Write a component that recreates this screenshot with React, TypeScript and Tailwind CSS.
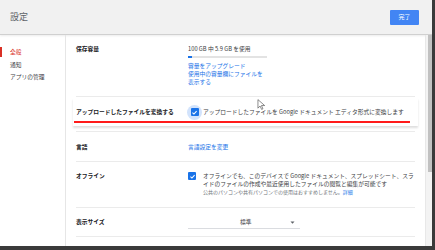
import { useState } from "react";

const sideItems = ["全般", "通知", "アプリの管理"];

function Check() {
  return (
    <span className="flex h-[8px] w-[8px] items-center justify-center rounded-[1px] bg-[#1a73e8]">
      <svg viewBox="0 0 12 12" className="h-[7px] w-[7px]">
        <path d="M2.5 6.2 5 8.6 9.6 3.6" fill="none" stroke="#fff" strokeWidth="1.8" />
      </svg>
    </span>
  );
}

function Row({ label, className, children }: { label: string; className: string; children?: React.ReactNode }) {
  return (
    <div className={"flex border-b border-[#ebebeb] " + className}>
      <div className="w-[112px] shrink-0 font-bold text-[#202124]">{label}</div>
      <div className="flex-1">{children}</div>
    </div>
  );
}

export default function App() {
  const [active] = useState(0);
  return (
    <div className="flex h-[250px] w-[435px] flex-col bg-[#3a3a3a] pb-[4px] pr-[3px] font-['Noto_Sans_CJK_JP','Noto_Sans',sans-serif] text-[5.75px] leading-[8px] text-[#3c4043]">
      <div className="flex flex-1 flex-col overflow-hidden bg-white">
        <div className="flex h-[35px] shrink-0 items-center justify-between border-b border-[#d0d0d0] bg-[#f1f1f1] pl-[10px] pr-[13px] shadow-[0_1px_2px_rgba(0,0,0,0.08)]">
          <span className="text-[9px] leading-[12px] text-[#5f6368]">設定</span>
          <button className="h-[15px] w-[29px] rounded-[1px] bg-[#4285f4] text-[6px] text-white">完了</button>
        </div>
        <div className="flex flex-1">
          <div className="w-[66px] shrink-0 border-r border-[#e6e6e6] pt-[11px]">
            {sideItems.map((item, i) => (
              <div key={item} className="flex h-[12.5px] items-center">
                <span className={"h-[10px] w-[2px] " + (i === active ? "bg-[#d93025]" : "")} />
                <span className={"pl-[8px] " + (i === active ? "text-[#d93025]" : "text-[#3c4043]")}>{item}</span>
              </div>
            ))}
          </div>
          <div className="relative flex-1 pl-[10px] pr-[10px]">
            <Row label="保存容量" className="h-[62px] pt-[10px]">
              <div>100 GB 中 5.9 GB を使用</div>
              <div className="mt-[3px] flex h-[2px] w-[79px] items-center bg-[#e3e3e3]">
                <div className="h-[2px] w-[4px] bg-[#1a73e8]" />
              </div>
              <div className="mt-[4px] leading-[7.8px] text-[#1a73e8]">
                <div>容量をアップグレード</div>
                <div>使用中の容量欄にファイルを</div>
                <div>表示する</div>
              </div>
            </Row>
            <div className="h-[35px] border-b border-[#ebebeb] pt-[1px]">
              <div className="-mx-[3px] flex h-[28px] items-center px-[3px] shadow-[0_2px_2px_rgba(0,0,0,0.13)]">
                <div className="w-[112px] shrink-0 font-bold text-[#202124]">アップロードしたファイルを変換する</div>
                <div className="flex items-center">
                  <span className="-ml-[1px] flex h-[15px] w-[15px] items-center justify-center rounded-full bg-[#d2e3fc]">
                    <Check />
                  </span>
                  <span className="ml-[1px] whitespace-nowrap">アップロードしたファイルを Google ドキュメント エディタ形式に変換します</span>
                </div>
              </div>
              <div className="-mt-[5px] ml-[-2px] h-[2px] w-[336px] bg-[#ff1a1a]" />
            </div>
            <Row label="言語" className="h-[30px] items-center">
              <span className="text-[#1a73e8]">言語設定を変更</span>
            </Row>
            <Row label="オフライン" className="h-[46px] pt-[10px]">
              <div className="flex">
                <span className="shrink-0">
                  <Check />
                </span>
                <div className="ml-[7px] whitespace-nowrap">
                  <div>オフラインでも、このデバイスで Google ドキュメント、スプレッドシート、スラ</div>
                  <div>イドのファイルの作成や最近使用したファイルの閲覧と編集が可能です</div>
                  <div className="text-[5px] text-[#70757a]">
                    公共のパソコンや共有パソコンでの使用はおすすめしません。<span className="text-[#1a73e8]">詳細</span>
                  </div>
                </div>
              </div>
            </Row>
            <Row label="表示サイズ" className="h-[29px] items-center">
              <div className="flex h-[14px] w-[112px] items-center border-b border-[#dadce0] pt-[1px]">
                <span className="ml-[52px]">標準</span>
                <svg viewBox="0 0 10 10" className="ml-[38px] h-[5px] w-[5px]">
                  <path d="M1 3h8L5 7.5z" fill="#5f6368" />
                </svg>
              </div>
            </Row>
            <svg viewBox="0 0 12 18" className="absolute left-[191px] top-[64px] h-[11px] w-[8px]">
              <path d="M1 1v14l3.5-3.5 2.5 5.5 2.2-1-2.5-5.3H12z" fill="#fff" stroke="#444" strokeWidth="1" />
            </svg>
          </div>
          <div className="w-[7px] shrink-0 border-l border-[#e8e8e8] bg-[#f3f3f3] pl-[2px]">
            <div className="h-[137px] w-[4px] bg-[#c1c1c1]" />
          </div>
        </div>
      </div>
    </div>
  );
}
